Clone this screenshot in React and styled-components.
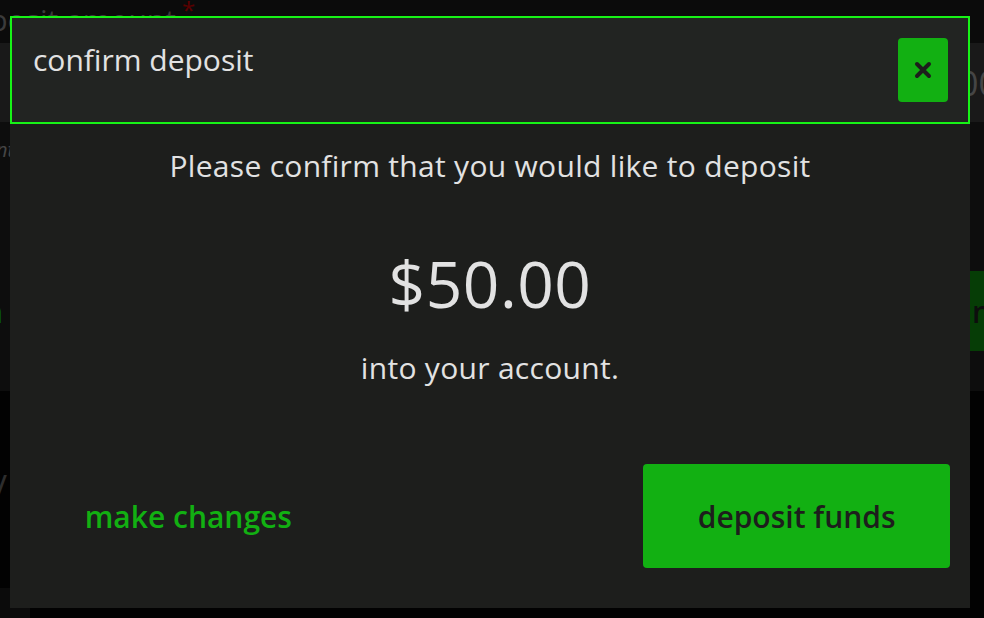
import React from 'react';
import styled, { createGlobalStyle } from 'styled-components';

const GlobalStyle = createGlobalStyle`
  html, body {
    margin: 0;
    padding: 0;
    background: #040404;
    overflow: hidden;
    font-family: "Open Sans", Lato, sans-serif;
  }
  * { box-sizing: border-box; }
`;

/* page behind the dialog */
const Page = styled.div`
  min-height: 100vh;
  display: flex;
  flex-direction: column;
  background: #040404;
`;

const FormCard = styled.section`
  margin: 0 -60px;
  padding: 0 0 40px;
  background: #1a1a1a;
  display: flex;
  flex-direction: column;
`;

const FieldLabel = styled.label`
  display: block;
  height: 43px;
  padding-left: 14px;
  background: #161616;
  color: #767676;
  font-size: 30px;
  line-height: 40px;
  white-space: nowrap;
`;

const Required = styled.span`
  color: #b40000;
  font-size: 24px;
  vertical-align: top;
  line-height: 20px;
  margin-left: 6px;
`;

const AmountInput = styled.div`
  height: 79px;
  background: #323232;
  color: #8a8a8a;
  font-size: 34px;
  display: flex;
  align-items: center;
  justify-content: flex-end;
  padding-right: 46px;
`;

const Hint = styled.p`
  margin: 14px 0 0 46px;
  color: #8a8a8a;
  font-style: italic;
  font-size: 20px;
`;

const FormActions = styled.div`
  margin-top: 108px;
  display: flex;
  justify-content: space-between;
  align-items: center;
`;

const BackLink = styled.span`
  margin-left: -30px;
  color: #14b414;
  font-size: 30px;
  font-weight: 600;
`;

const SubmitButton = styled.span`
  width: 200px;
  height: 80px;
  background: #0c7a0c;
  color: #1a1a1a;
  font-size: 30px;
  font-weight: 600;
  display: flex;
  align-items: center;
  padding-left: 128px;
`;

const Divider = styled.span`
  margin: 72px 0 0 -6px;
  color: #5a5a5a;
  font-size: 36px;
`;

const PageFooter = styled.div`
  margin-top: auto;
  width: 30px;
  height: 30px;
  background: #161616;
`;

/* dialog */
const Overlay = styled.div`
  position: fixed;
  inset: 0;
  background: rgba(0, 0, 0, 0.5);
`;

const Dialog = styled.div`
  position: fixed;
  top: 16px;
  left: 10px;
  width: 960px;
  height: 592px;
  background: #1d1e1c;
  color: #e2e2e2;
  display: flex;
  flex-direction: column;
`;

const DialogHeader = styled.header`
  height: 108px;
  border: 2px solid #17f317;
  background: #222422;
  display: flex;
  justify-content: space-between;
  align-items: flex-start;
  padding: 20px 20px 0 21px;
`;

const DialogTitle = styled.h2`
  margin: 0;
  font-size: 30px;
  font-weight: 400;
  line-height: 44px;
`;

const CloseButton = styled.button`
  width: 50px;
  height: 64px;
  border: none;
  border-radius: 4px;
  background: #12b012;
  display: flex;
  align-items: center;
  justify-content: center;
  padding: 0;
  cursor: pointer;
`;

const DialogBody = styled.div`
  flex: 1;
  display: flex;
  flex-direction: column;
  align-items: center;
  padding: 24px 20px 40px;
`;

const Message = styled.p`
  margin: ${p => p.$gap || '0'};
  font-size: 30px;
  line-height: 36px;
  letter-spacing: 0.3px;
  text-align: center;
`;

const Amount = styled.div`
  margin-top: 64px;
  font-size: 64px;
  line-height: 72px;
  letter-spacing: 0.5px;
`;

const ActionRow = styled.div`
  margin-top: auto;
  width: 100%;
  display: grid;
  grid-template-columns: repeat(3, 1fr);
  align-items: center;
`;

const TextAction = styled.button`
  grid-column: 1;
  height: 104px;
  border: none;
  background: none;
  color: #12b012;
  font-family: inherit;
  font-size: 30px;
  font-weight: 600;
  padding: 0 0 0 10px;
  cursor: pointer;
`;

const PrimaryAction = styled.button`
  grid-column: 3;
  height: 104px;
  border: none;
  border-radius: 4px;
  background: #12b012;
  color: #1d1e1c;
  font-family: inherit;
  font-size: 30px;
  font-weight: 600;
  cursor: pointer;
`;

const CloseIcon = () => (
  <svg width="18" height="18" viewBox="0 0 18 18">
    <path d="M3 3 L15 15 M15 3 L3 15" stroke="#1d1e1c" strokeWidth="4" strokeLinecap="round" />
  </svg>
);

export default function App() {
  return (
    <>
      <GlobalStyle />
      <Page>
        <FormCard>
          <FieldLabel>deposit amount<Required>*</Required></FieldLabel>
          <AmountInput>50.00</AmountInput>
          <Hint>enter an amount</Hint>
          <FormActions>
            <BackLink>return</BackLink>
            <SubmitButton>next</SubmitButton>
          </FormActions>
        </FormCard>
        <Divider>/</Divider>
        <PageFooter />
      </Page>
      <Overlay />
      <Dialog role="dialog">
        <DialogHeader>
          <DialogTitle>confirm deposit</DialogTitle>
          <CloseButton aria-label="close"><CloseIcon /></CloseButton>
        </DialogHeader>
        <DialogBody>
          <Message>Please confirm that you would like to deposit</Message>
          <Amount>$50.00</Amount>
          <Message $gap="30px 0 0">into your account.</Message>
          <ActionRow>
            <TextAction>make changes</TextAction>
            <PrimaryAction>deposit funds</PrimaryAction>
          </ActionRow>
        </DialogBody>
      </Dialog>
    </>
  );
}
